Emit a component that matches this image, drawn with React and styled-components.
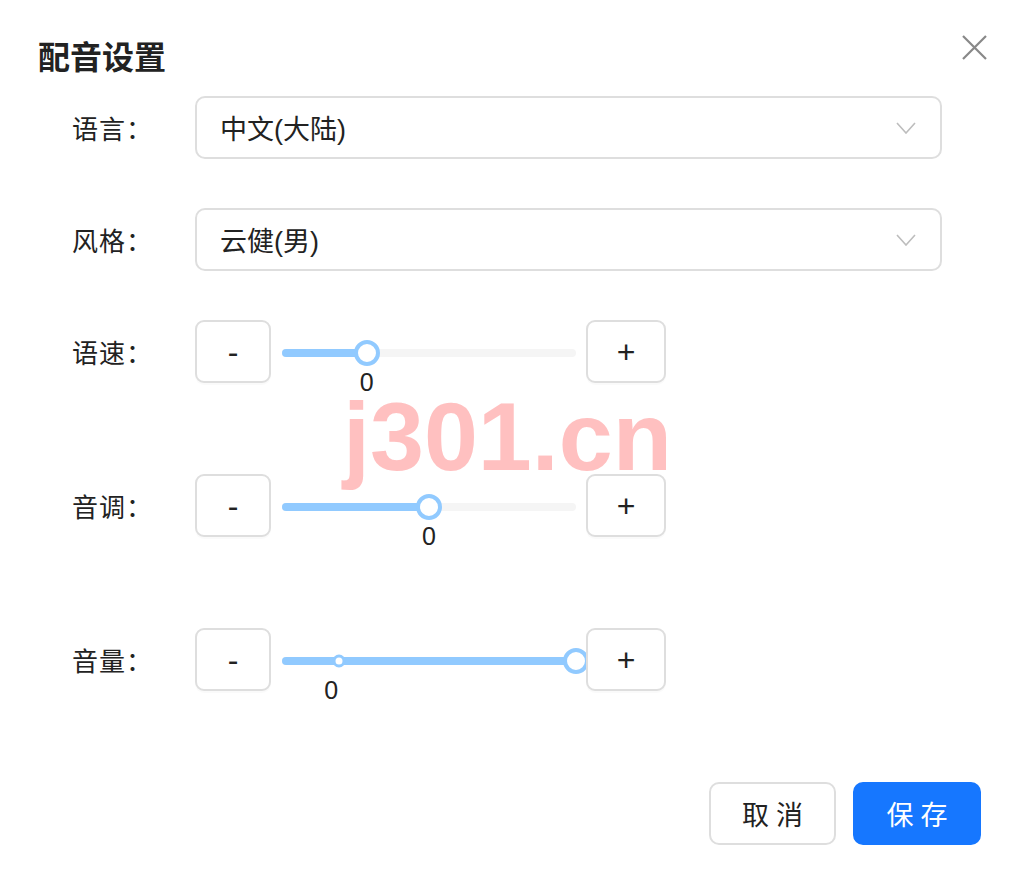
import React from "react";
import styled, { createGlobalStyle } from "styled-components";

const GlobalStyle = createGlobalStyle`
  body {
    margin: 0;
    background: #fff;
    font-family: "Liberation Sans", "Noto Sans CJK SC", sans-serif;
    color: #222;
  }
`;

const Dialog = styled.div`
  position: relative;
  width: 1018px;
  height: 872px;
  box-sizing: border-box;
  padding: 0 37px 0 38px;
  background: #fff;
`;

const Header = styled.div`
  display: flex;
  justify-content: space-between;
  align-items: flex-start;
  padding-top: 35px;
  margin-bottom: 22px;
`;

const Title = styled.h2`
  margin: 7px 0 0 0;
  font-size: 32px;
  line-height: 32px;
  font-weight: 700;
  color: #222;
`;

const CloseButton = styled.button`
  width: 25px;
  height: 25px;
  padding: 0;
  margin-right: -6px;
  border: none;
  background: none;
  cursor: pointer;
`;

const Form = styled.div`
  display: flex;
  flex-direction: column;
  padding-left: 34px;
`;

const Row = styled.div`
  display: flex;
  align-items: center;
  height: 63px;
  margin-bottom: ${(props) => props.$gap}px;
`;

const Label = styled.label`
  width: 123px;
  flex-shrink: 0;
  font-size: 26px;
  letter-spacing: 1px;
  color: #222;
`;

const Select = styled.div`
  width: 747px;
  height: 63px;
  box-sizing: border-box;
  display: flex;
  align-items: center;
  justify-content: space-between;
  padding: 0 24px 0 23px;
  border: 2px solid #dedede;
  border-radius: 10px;
  font-size: 27px;
  color: #222;
`;

const StepButton = styled.button`
  position: relative;
  z-index: 1;
  width: ${(props) => props.$width}px;
  height: 63px;
  flex-shrink: 0;
  box-sizing: border-box;
  border: 2px solid #dedede;
  border-radius: 9px;
  background: #fff;
  box-shadow: 0 2px 0 rgba(0, 0, 0, 0.02);
  font-family: "Liberation Sans", sans-serif;
  font-size: 32px;
  line-height: 1;
  color: #222;
  padding: 0;
`;

const Track = styled.div`
  position: relative;
  width: 294px;
  height: 8px;
  margin: 3px 10px 0 11px;
  border-radius: 4px;
  background: #f5f5f5;
`;

const Fill = styled.div`
  position: absolute;
  left: 0;
  top: 0;
  height: 100%;
  border-radius: 4px;
  background: #91caff;
`;

const Thumb = styled.div`
  position: absolute;
  top: 50%;
  width: ${(props) => props.$size}px;
  height: ${(props) => props.$size}px;
  box-sizing: border-box;
  border: ${(props) => (props.$size > 16 ? 4 : 3)}px solid #91caff;
  border-radius: 50%;
  background: #fff;
  transform: translate(-50%, -50%);
`;

const Value = styled.span`
  position: absolute;
  top: 19px;
  font-size: 25px;
  line-height: 28px;
  color: #222;
  transform: translateX(-50%);
`;

const Footer = styled.div`
  display: flex;
  justify-content: flex-end;
  gap: 17px;
`;

const FooterButton = styled.button`
  width: ${(props) => props.$width}px;
  height: 63px;
  box-sizing: border-box;
  padding: 0 0 0 7px;
  border-radius: 10px;
  border: 2px solid ${(props) => (props.$primary ? "#1677ff" : "#dedede")};
  background: ${(props) => (props.$primary ? "#1677ff" : "#fff")};
  color: ${(props) => (props.$primary ? "#fff" : "#222")};
  font-family: "Noto Sans CJK SC", sans-serif;
  font-size: 27px;
  letter-spacing: 7px;
`;

const Watermark = styled.div`
  position: absolute;
  left: 343px;
  top: 388px;
  font-family: "Liberation Sans", sans-serif;
  font-weight: 700;
  font-size: 97px;
  line-height: 97px;
  color: #ffc0c0;
  pointer-events: none;
`;

const Chevron = () => (
  <svg width="20" height="12" viewBox="0 0 20 12" fill="none">
    <path d="M1 1 L10 11 L19 1" stroke="#bdbdbd" strokeWidth="1.6" />
  </svg>
);

const CloseIcon = () => (
  <svg width="25" height="25" viewBox="0 0 25 25" fill="none">
    <path d="M1 1 L24 24 M24 1 L1 24" stroke="#888" strokeWidth="2.2" />
  </svg>
);

const sliders = [
  { label: "语速：", value: 28.8, mark: 28.8 },
  { label: "音调：", value: 50, mark: 50 },
  { label: "音量：", value: 100, mark: 16.7, dot: 19.4 },
];

const SliderRow = ({ label, value, mark, dot }) => (
  <Row $gap={91}>
    <Label>{label}</Label>
    <StepButton $width={76}>-</StepButton>
    <Track>
      <Fill style={{ width: `${value}%` }} />
      {dot !== undefined && <Thumb $size={13} style={{ left: `${dot}%` }} />}
      <Thumb $size={26} style={{ left: `${value}%` }} />
      <Value style={{ left: `${mark}%` }}>0</Value>
    </Track>
    <StepButton $width={80}>+</StepButton>
  </Row>
);

export default function App() {
  return (
    <>
      <GlobalStyle />
      <Dialog>
        <Header>
          <Title>配音设置</Title>
          <CloseButton>
            <CloseIcon />
          </CloseButton>
        </Header>

        <Form>
          <Row $gap={49}>
            <Label>语言：</Label>
            <Select>
              <span>中文(大陆)</span>
              <Chevron />
            </Select>
          </Row>
          <Row $gap={49}>
            <Label>风格：</Label>
            <Select>
              <span>云健(男)</span>
              <Chevron />
            </Select>
          </Row>
          {sliders.map((s) => (
            <SliderRow key={s.label} {...s} />
          ))}
        </Form>

        <Footer>
          <FooterButton $width={127}>取消</FooterButton>
          <FooterButton $width={128} $primary>
            保存
          </FooterButton>
        </Footer>

        <Watermark>j301.cn</Watermark>
      </Dialog>
    </>
  );
}
